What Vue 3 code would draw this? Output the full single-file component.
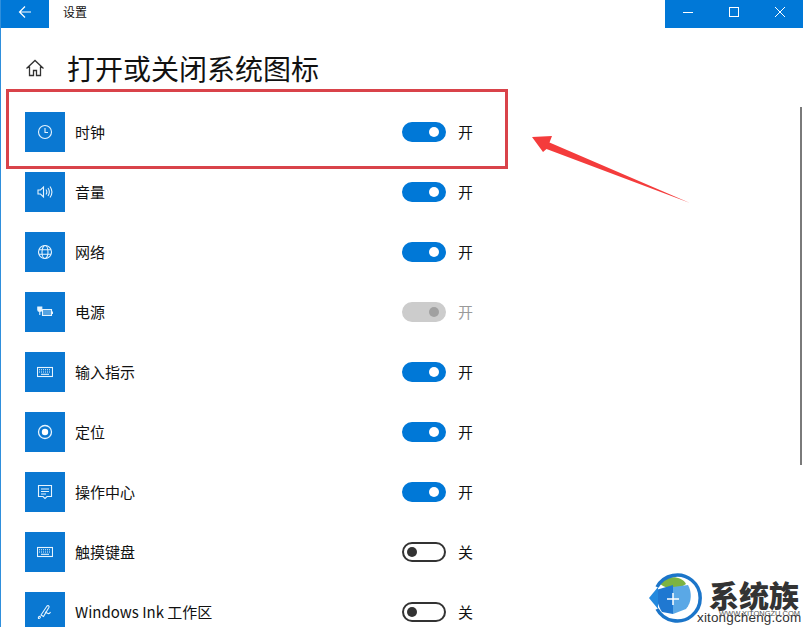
<script setup>
const rows = [
  { name: '时钟', icon: 'clock', state: 'on' },
  { name: '音量', icon: 'volume', state: 'on' },
  { name: '网络', icon: 'globe', state: 'on' },
  { name: '电源', icon: 'power', state: 'disabled' },
  { name: '输入指示', icon: 'keyboard', state: 'on' },
  { name: '定位', icon: 'location', state: 'on' },
  { name: '操作中心', icon: 'action', state: 'on' },
  { name: '触摸键盘', icon: 'keyboard', state: 'off' },
  { name: 'Windows Ink 工作区', icon: 'ink', state: 'off' }
]
</script>

<template>
  <div class="window">
    <header class="titlebar">
      <button class="back">
        <svg width="16" height="16" viewBox="0 0 16 16" fill="none" stroke="#fff" stroke-width="1.2">
          <path d="M14 8H2.5M8 2.5 2.5 8 8 13.5" />
        </svg>
      </button>
      <span class="app-name">设置</span>
      <div class="controls">
        <svg width="46" height="28" viewBox="0 0 46 28" fill="none" stroke="#fff" stroke-width="1">
          <path d="M18 12.5H28" />
        </svg>
        <svg width="46" height="28" viewBox="0 0 46 28" fill="none" stroke="#fff" stroke-width="1">
          <rect x="18.5" y="7.5" width="9" height="9" />
        </svg>
        <svg width="46" height="28" viewBox="0 0 46 28" fill="none" stroke="#fff" stroke-width="1">
          <path d="M18 7 28 17M28 7 18 17" />
        </svg>
      </div>
    </header>

    <div class="heading">
      <svg class="home" width="20" height="20" viewBox="0 0 20 20" fill="none" stroke="#333" stroke-width="1.3">
        <path d="M1.5 10.5 10 2.5l8.5 8M4.500 8.500v9h4v-5h3v5h4v-9" />
      </svg>
      <h1>打开或关闭系统图标</h1>
    </div>

    <div class="list">
      <div v-for="row in rows" :key="row.name" class="row">
        <div class="tile">
          <svg width="16" height="16" viewBox="0 0 16 16" fill="none" stroke="#e6f4fe" stroke-width="1.1">
            <template v-if="row.icon === 'clock'">
              <circle cx="8" cy="8" r="6.500" />
              <path d="M8 4v4.500h3" />
            </template>
            <template v-else-if="row.icon === 'volume'">
              <path d="M1 6h2.500L6.500 3v10l-3-3H1zM9 5.500c1 1.500 1 3.500 0 5M11 4c1.600 2.400 1.600 5.600 0 8M13 2.500c2.400 3.400 2.400 7.600 0 11" />
            </template>
            <template v-else-if="row.icon === 'globe'">
              <circle cx="8" cy="8" r="6.500" />
              <ellipse cx="8" cy="8" rx="3" ry="6.500" />
              <path d="M2 5.800h12M2 10.200h12" />
            </template>
            <template v-else-if="row.icon === 'power'">
              <path d="M5.500 5.500h9v6h-9z" fill="#e6f4fe" fill-opacity=".35" />
              <path d="M15.500 7.500v2.500" />
              <path d="M.8 3v3c0 1.800 4 1.800 4 0V3zM2.800 7.500V11" fill="#e6f4fe" />
            </template>
            <template v-else-if="row.icon === 'keyboard'">
              <rect x="0.500" y="3.500" width="15" height="9" />
              <path d="M2 5.800h12M2 8h12" stroke-dasharray="1 1" />
              <path d="M4 10.300h8" />
            </template>
            <template v-else-if="row.icon === 'location'">
              <circle cx="8" cy="8" r="6.500" stroke-width="1.300" />
              <circle cx="8" cy="8" r="3.200" fill="#fff" stroke="none" />
            </template>
            <template v-else-if="row.icon === 'action'">
              <path d="M1.500 1.500h13v11H10l-2 2-2-2H1.500z" />
              <path d="M4 5h8M4 7.500h8M4 10h5" />
            </template>
            <template v-else>
              <path d="M1.500 14.500c-.5-1.500.5-2.500 1.500-2 1 .6 0 2-1.500 2zM4 11 10 2c1-1 2.500 0 2 1.200L6.500 12.500zM8 8l3 1.500c1.500.5 2-.5 2.500-1.500" />
            </template>
          </svg>
        </div>
        <span class="name">{{ row.name }}</span>
        <div class="switch-wrap" :class="row.state">
          <span class="switch"><i class="knob"></i></span>
          <span class="state">{{ row.state === 'off' ? '关' : '开' }}</span>
        </div>
      </div>
    </div>

    <div class="scrollbar"></div>

    <div class="highlight"></div>
    <svg class="arrow" width="170" height="80" viewBox="0 0 170 80">
      <path d="M1 7 21 6 18.500 12.500 159 73 15.500 19 12 22Z" fill="#f43c3c" />
    </svg>

    <div class="watermark">
      <svg class="globe-logo" width="58" height="56" viewBox="0 0 58 56">
        <circle cx="24" cy="29" r="23" fill="#fff" />
        <path d="M11 15C15 6 33 6 37 15 29 21 19 21 11 15Z" fill="#7cb342" />
        <path d="M7 21 24 16V45L13 43C9 37 7 29 7 21Z" fill="#1f78d1" />
        <path d="M24 18 39 16C43 23 43 33 37 40L24 45Z" fill="#5aa8e6" />
        <path d="M8 40A23 23 0 1 0 8 18" fill="none" stroke="#1b75c9" stroke-width="3.500" />
        <path d="M0 29 9 18V40Z" fill="#2389de" />
        <path d="M24 24v12M18 30h12" stroke="#fff" stroke-width="1.500" />
      </svg>
      <span class="wm-title">系统族</span>
      <span class="wm-url-small">WWW.XITONGZU.COM</span>
      <span class="wm-url">xitongcheng.com</span>
    </div>
  </div>
</template>

<style scoped>
.window {
  position: relative;
  width: 803px;
  height: 627px;
  overflow: hidden;
  box-sizing: border-box;
  border-left: 1px solid #2f8fdc;
  background: #fff;
  color: #111;
  font-family: "Noto Sans CJK SC", "Liberation Sans", sans-serif;
}

.titlebar {
  display: flex;
  align-items: center;
  height: 28px;
  margin-left: -1px;
}

.back {
  display: flex;
  align-items: center;
  justify-content: center;
  width: 49px;
  height: 28px;
  padding: 0 0 4px;
  border: 0;
  background: #0078d7;
}

.app-name {
  margin-left: 14px;
  padding-bottom: 6px;
  font-size: 12px;
}

.controls {
  display: flex;
  margin-left: auto;
  width: 138px;
  height: 28px;
  background: #0078d7;
}

.heading {
  display: flex;
  align-items: center;
  height: 40px;
  padding: 20px 0 24px 24px;
}

.home {
  flex: none;
}

.heading h1 {
  margin: 0 0 0 22px;
  font-size: 28px;
  font-weight: 400;
  line-height: 40px;
  color: #111;
}

.list {
  display: flex;
  flex-direction: column;
  gap: 20px;
  padding-left: 24px;
}

.row {
  display: flex;
  align-items: center;
  height: 40px;
}

.tile {
  display: flex;
  flex: none;
  align-items: center;
  justify-content: center;
  width: 40px;
  height: 40px;
  background: #0a78d2;
}

.name {
  width: 327px;
  margin-left: 10px;
  padding-bottom: 2px;
  font-size: 15px;
  white-space: nowrap;
}

.switch-wrap {
  display: flex;
  align-items: center;
}

.switch {
  display: flex;
  align-items: center;
  justify-content: flex-end;
  box-sizing: border-box;
  width: 44px;
  height: 20px;
  padding: 0 5px;
  border: 2px solid #0078d7;
  border-radius: 10px;
  background: #0078d7;
}

.knob {
  width: 10px;
  height: 10px;
  border-radius: 50%;
  background: #fff;
}

.state {
  margin-left: 12px;
  padding-bottom: 2px;
  font-size: 15px;
}

.disabled .switch {
  border-color: #ccc;
  background: #ccc;
}

.disabled .knob {
  background: #a0a0a0;
}

.disabled .state {
  color: #9a9a9a;
}

.off .switch {
  justify-content: flex-start;
  border-color: #333;
  background: #fff;
  padding: 0 3px;
}

.off .knob {
  background: #333;
}

.scrollbar {
  position: absolute;
  top: 107px;
  right: 1px;
  width: 2px;
  height: 358px;
  background: #7a7a7a;
}

.highlight {
  position: absolute;
  top: 89px;
  left: 5px;
  width: 502px;
  height: 80px;
  box-sizing: border-box;
  border: 3px solid #d9434a;
}

.arrow {
  position: absolute;
  top: 130px;
  left: 530px;
}

.watermark {
  position: absolute;
  top: 566px;
  left: 648px;
  width: 154px;
  height: 61px;
}

.globe-logo {
  position: absolute;
  top: 3px;
  left: 0;
}

.wm-title {
  position: absolute;
  top: 12px;
  left: 60px;
  font-size: 30px;
  font-weight: 900;
  line-height: 32px;
  color: #333;
  white-space: nowrap;
}

.wm-url-small {
  position: absolute;
  top: 44px;
  left: 70px;
  font-family: "Liberation Sans", sans-serif;
  font-size: 7.5px;
  line-height: 8px;
  color: #555;
  white-space: nowrap;
}

.wm-url {
  position: absolute;
  top: 45px;
  left: 48px;
  font-family: "Liberation Sans", sans-serif;
  font-size: 13.5px;
  line-height: 14px;
  letter-spacing: 0.15px;
  color: #333;
  white-space: nowrap;
}
</style>

<style>
body {
  background: #fff;
}
</style>
